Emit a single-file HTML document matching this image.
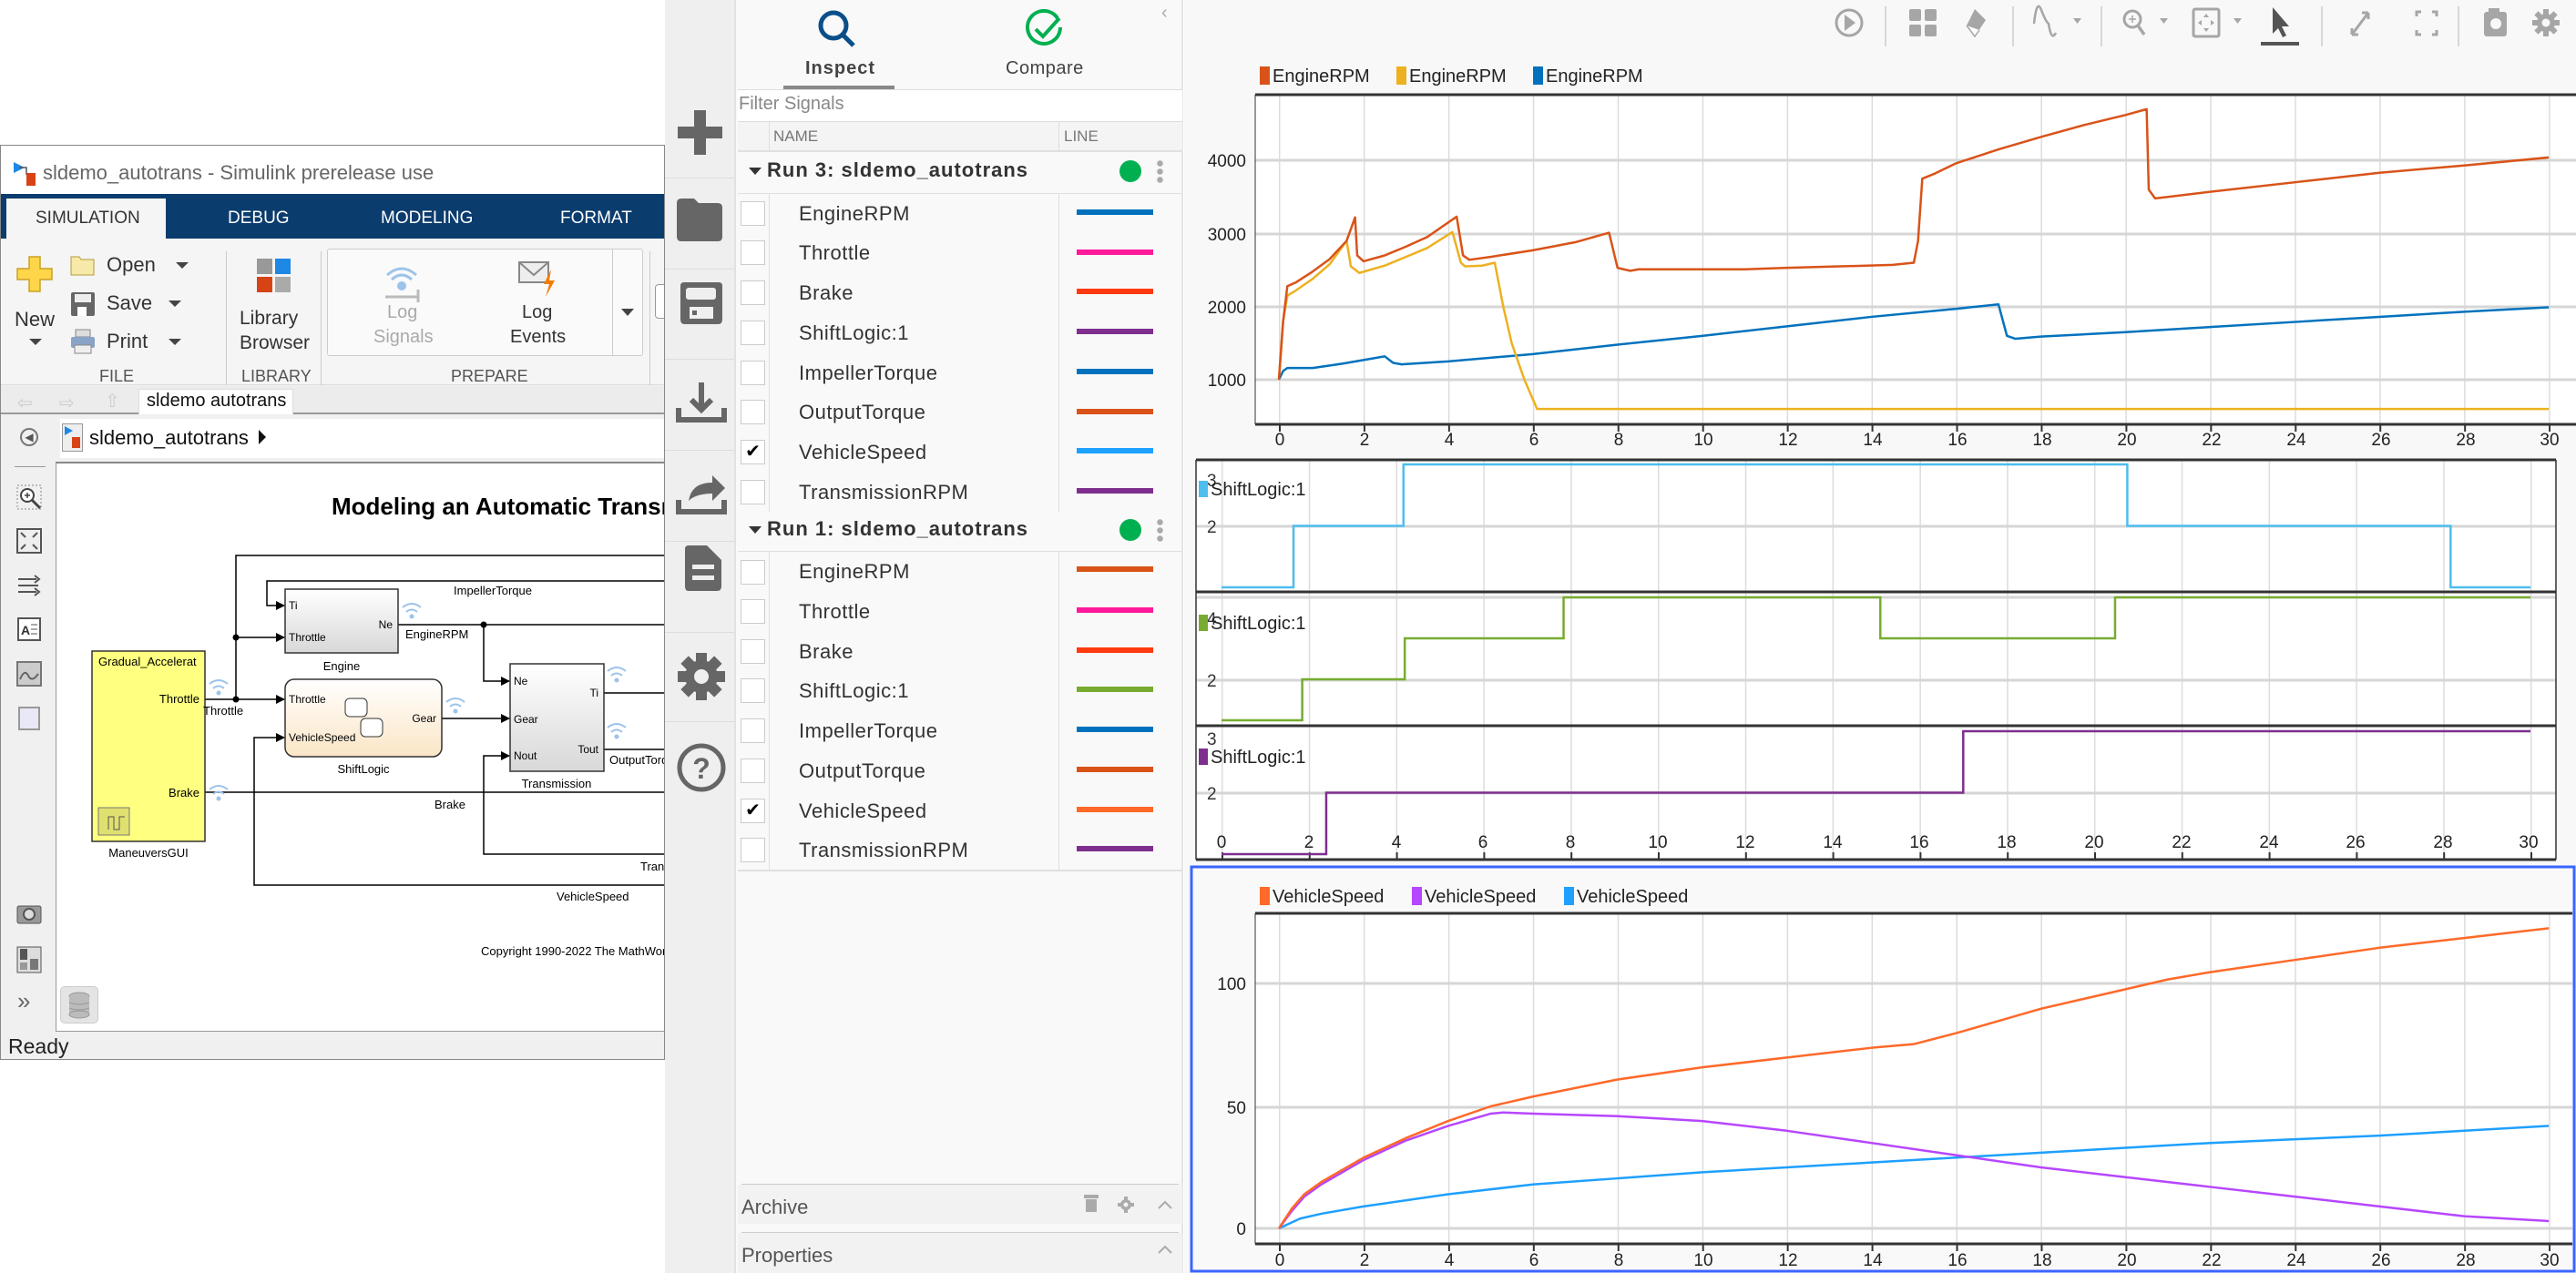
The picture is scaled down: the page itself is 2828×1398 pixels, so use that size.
<!DOCTYPE html>
<html><head><meta charset="utf-8"><style>
*{margin:0;padding:0;box-sizing:border-box}
body{width:2828px;height:1398px;position:relative;overflow:hidden;background:#fff;font-family:"Liberation Sans",Arial,sans-serif}
.a{position:absolute}
.sig{position:absolute;left:877px;font-size:22px;color:#333;letter-spacing:0.5px}
.cb{position:absolute;left:813px;width:27px;height:27px;background:#fff;border:1px solid #ccc}
.ln{position:absolute;left:1182px;width:84px;height:6px}
</style></head><body>

<!-- ============ SIMULINK WINDOW ============ -->
<div class="a" style="left:0;top:159px;width:730px;height:1005px;border:1px solid #888;background:#f0f0f0;overflow:hidden">
 <div class="a" style="left:0;top:0;width:730px;height:53px;background:#fff"></div>
 <svg class="a" style="left:12px;top:14px" width="32" height="36" viewBox="0 0 32 36"><path d="M2 4 L14 10 L2 16Z" fill="#1e88e5"/><path d="M8 10 h8 v8" stroke="#555" fill="none" stroke-width="1.5"/><rect x="16" y="16" width="10" height="14" fill="#d84315"/></svg>
 <div class="a" style="left:46px;top:17px;font-size:22px;color:#666">sldemo_autotrans - Simulink prerelease use</div>
 <div class="a" style="left:0;top:53px;width:730px;height:49px;background:#0b3c6e"></div>
 <div class="a" style="left:6px;top:58px;width:175px;height:44px;background:#f5f5f5"></div>
 <div class="a" style="left:38px;top:69px;font-size:19px;color:#333">SIMULATION</div>
 <div class="a" style="left:249px;top:69px;font-size:19px;color:#fff">DEBUG</div>
 <div class="a" style="left:417px;top:69px;font-size:19px;color:#fff">MODELING</div>
 <div class="a" style="left:614px;top:69px;font-size:19px;color:#fff">FORMAT</div>
 <div class="a" style="left:0;top:102px;width:730px;height:161px;background:#f5f5f5;border-bottom:1px solid #ddd"></div>
 <svg class="a" style="left:17px;top:121px" width="40" height="40" viewBox="0 0 40 40"><path d="M14 1h12v13h13v12H26v13H14V26H1V14h13z" fill="#ffd54a" stroke="#c9a227" stroke-width="1.5"/></svg>
 <div class="a" style="left:15px;top:178px;font-size:22px;color:#333">New</div>
 <div class="a" style="left:31px;top:212px;width:0;height:0;border-left:7px solid transparent;border-right:7px solid transparent;border-top:7px solid #444"></div>
 <svg class="a" style="left:76px;top:119px" width="28" height="24"><path d="M1 3h9l2 3h14v17H1z" fill="#f7e9a8" stroke="#b59a3c"/></svg>
 <div class="a" style="left:116px;top:118px;font-size:22px;color:#333">Open</div>
 <div class="a" style="left:192px;top:128px;border-left:7px solid transparent;border-right:7px solid transparent;border-top:7px solid #444"></div>
 <svg class="a" style="left:76px;top:160px" width="28" height="28"><rect x="1" y="1" width="26" height="26" rx="2" fill="#666"/><rect x="5" y="3" width="18" height="9" fill="#eee"/><rect x="8" y="17" width="10" height="10" fill="#fff"/></svg>
 <div class="a" style="left:116px;top:160px;font-size:22px;color:#333">Save</div>
 <div class="a" style="left:184px;top:170px;border-left:7px solid transparent;border-right:7px solid transparent;border-top:7px solid #444"></div>
 <svg class="a" style="left:76px;top:201px" width="28" height="28"><rect x="6" y="1" width="16" height="8" fill="#ddd" stroke="#888"/><rect x="1" y="9" width="26" height="12" rx="2" fill="#8aa4c8"/><rect x="5" y="18" width="18" height="9" fill="#eee" stroke="#888"/></svg>
 <div class="a" style="left:116px;top:202px;font-size:22px;color:#333">Print</div>
 <div class="a" style="left:184px;top:212px;border-left:7px solid transparent;border-right:7px solid transparent;border-top:7px solid #444"></div>
 <div class="a" style="left:247px;top:116px;width:1px;height:147px;background:#ccc"></div>
 <svg class="a" style="left:280px;top:123px" width="40" height="40"><rect x="1" y="1" width="17" height="17" fill="#999"/><rect x="21" y="1" width="17" height="17" fill="#1e88e5"/><rect x="1" y="21" width="17" height="17" fill="#d84315"/><rect x="21" y="21" width="17" height="17" fill="#aaa"/></svg>
 <div class="a" style="left:262px;top:178px;font-size:21px;color:#333">Library</div>
 <div class="a" style="left:262px;top:205px;font-size:21px;color:#333">Browser</div>
 <div class="a" style="left:351px;top:116px;width:1px;height:147px;background:#ccc"></div>
 <div class="a" style="left:358px;top:113px;width:347px;height:118px;background:#fafafa;border:1px solid #ccc;border-radius:3px"></div>
 <div class="a" style="left:671px;top:114px;width:1px;height:116px;background:#ccc"></div>
 <svg class="a" style="left:420px;top:128px" width="44" height="44"><path d="M4 14 Q20 0 36 14 M9 19 Q20 9 31 19" stroke="#9cc3ea" stroke-width="3" fill="none"/><circle cx="20" cy="26" r="5" fill="#9cc3ea"/><path d="M2 38h36" stroke="#bbb" stroke-width="3"/><path d="M38 30v14" stroke="#bbb" stroke-width="3"/></svg>
 <div class="a" style="left:424px;top:172px;font-size:20px;color:#aaa">Log</div>
 <div class="a" style="left:409px;top:199px;font-size:20px;color:#aaa">Signals</div>
 <svg class="a" style="left:568px;top:126px" width="44" height="44"><rect x="1" y="2" width="32" height="22" fill="#eee" stroke="#888" stroke-width="2"/><path d="M1 2 L17 16 L33 2" stroke="#888" stroke-width="2" fill="none"/><path d="M36 10 L28 26 h6 l-4 14 l10 -18 h-6 z" fill="#f57c00"/></svg>
 <div class="a" style="left:572px;top:172px;font-size:20px;color:#333">Log</div>
 <div class="a" style="left:559px;top:199px;font-size:20px;color:#333">Events</div>
 <div class="a" style="left:681px;top:179px;border-left:7px solid transparent;border-right:7px solid transparent;border-top:8px solid #444"></div>
 <div class="a" style="left:712px;top:116px;width:1px;height:147px;background:#ccc"></div>
 <div class="a" style="left:718px;top:152px;width:14px;height:38px;border:1px solid #999;border-radius:4px;background:#fff"></div>
 <div class="a" style="left:108px;top:243px;font-size:18px;color:#555">FILE</div>
 <div class="a" style="left:264px;top:243px;font-size:18px;color:#555">LIBRARY</div>
 <div class="a" style="left:494px;top:243px;font-size:18px;color:#555">PREPARE</div>
 <div class="a" style="left:0;top:264px;width:730px;height:31px;background:#ececec;border-bottom:2px solid #999"></div>
 <div class="a" style="left:18px;top:270px;font-size:20px;color:#ccc">⇦</div>
 <div class="a" style="left:64px;top:270px;font-size:20px;color:#ccc">⇨</div>
 <div class="a" style="left:114px;top:268px;font-size:20px;color:#ccc">⇧</div>
 <div class="a" style="left:151px;top:267px;width:170px;height:28px;background:#fff;border:1px solid #ddd;border-bottom:none"></div>
 <div class="a" style="left:160px;top:269px;font-size:20px;color:#111">sldemo  autotrans</div>
 <div class="a" style="left:65px;top:300px;width:665px;height:43px;background:#fff"></div>
 <svg class="a" style="left:67px;top:305px" width="24" height="32"><rect x="0.5" y="0.5" width="22" height="30" fill="#eee" stroke="#999"/><path d="M3 3l9 5-9 5z" fill="#1e88e5"/><rect x="11" y="15" width="9" height="12" fill="#d84315"/></svg>
 <div class="a" style="left:97px;top:308px;font-size:22px;color:#111">sldemo_autotrans</div>
 <div class="a" style="left:283px;top:312px;border-top:8px solid transparent;border-bottom:8px solid transparent;border-left:8px solid #111"></div>
 <div class="a" style="left:60px;top:347px;width:670px;height:2px;background:#888"></div>
 <div class="a" style="left:61px;top:349px;width:669px;height:623px;background:#fff"></div>
 <div class="a" style="left:60px;top:349px;width:1px;height:624px;background:#999"></div>
 <div class="a" style="left:61px;top:972px;width:669px;height:1px;background:#999"></div>
 <div class="a" style="left:21px;top:310px;width:20px;height:20px;border:2px solid #777;border-radius:50%;font-size:12px;line-height:16px;text-align:center;color:#555">◀</div>
 <div class="a" style="left:15px;top:352px;width:34px;height:1px;background:#999"></div>
 <svg class="a" style="left:17px;top:372px" width="30" height="30"><rect x="1" y="1" width="26" height="26" fill="none" stroke="#888" stroke-dasharray="2 2"/><circle cx="12" cy="12" r="7" fill="#fff" stroke="#444" stroke-width="2"/><path d="M17 17l9 9" stroke="#444" stroke-width="3"/><path d="M9 12h6M12 9v6" stroke="#444" stroke-width="1.5"/></svg>
 <svg class="a" style="left:17px;top:420px" width="28" height="28"><rect x="1" y="1" width="26" height="26" fill="#eee" stroke="#555" stroke-width="2"/><path d="M5 5l5 5M23 5l-5 5M5 23l5-5M23 23l-5-5" stroke="#555" stroke-width="2"/></svg>
 <svg class="a" style="left:17px;top:470px" width="28" height="26"><path d="M2 6h20M2 13h22M2 20h20M20 2l5 4-5 4M20 16l5 4-5 4" stroke="#555" stroke-width="2" fill="none"/></svg>
 <svg class="a" style="left:18px;top:518px" width="26" height="26"><rect x="1" y="1" width="24" height="24" fill="#fff" stroke="#555" stroke-width="2"/><text x="4" y="19" font-size="14" font-weight="bold" fill="#333" font-family="Liberation Sans">A</text><path d="M15 8h7M15 13h7M15 18h7" stroke="#555"/></svg>
 <svg class="a" style="left:17px;top:566px" width="28" height="28"><rect x="1" y="1" width="26" height="26" fill="#ccc" stroke="#777" stroke-width="2"/><path d="M4 20 Q9 8 13 16 T24 14" stroke="#666" stroke-width="2" fill="none"/></svg>
 <div class="a" style="left:19px;top:616px;width:24px;height:26px;background:#e8e8f6;border:2px solid #999"></div>
 <svg class="a" style="left:17px;top:830px" width="28" height="26"><rect x="1" y="5" width="26" height="19" rx="2" fill="#999" stroke="#555"/><circle cx="14" cy="14" r="6" fill="#ddd" stroke="#555" stroke-width="2"/></svg>
 <svg class="a" style="left:17px;top:879px" width="28" height="30"><rect x="1" y="1" width="26" height="28" fill="#ddd" stroke="#555"/><rect x="4" y="3" width="8" height="12" fill="#555"/><rect x="15" y="14" width="9" height="12" fill="#777"/><rect x="4" y="18" width="8" height="8" fill="#999"/></svg>
 <div class="a" style="left:18px;top:924px;font-size:26px;color:#666">»</div>
 <div class="a" style="left:65px;top:923px;width:42px;height:41px;background:#e4e4e4;border:1px solid #ccc;border-radius:5px"></div>
 <svg class="a" style="left:73px;top:929px" width="26" height="30"><ellipse cx="13" cy="5" rx="11" ry="4" fill="#bbb" stroke="#999"/><rect x="2" y="5" width="22" height="20" fill="#bbb"/><ellipse cx="13" cy="25" rx="11" ry="4" fill="#bbb" stroke="#999"/><path d="M2 12 Q13 16 24 12M2 18 Q13 22 24 18" stroke="#999" fill="none"/></svg>
 <div class="a" style="left:8px;top:976px;font-size:23px;color:#222">Ready</div>

 <svg class="a" style="left:0;top:0" width="730" height="1005" viewBox="0 159 730 1005" font-family="Liberation Sans, sans-serif">
  <defs><linearGradient id="gg" x1="0" y1="0" x2="0" y2="1"><stop offset="0" stop-color="#fff"/><stop offset="1" stop-color="#d8d8d8"/></linearGradient>
  <linearGradient id="sl" x1="0" y1="0" x2="0" y2="1"><stop offset="0" stop-color="#fff"/><stop offset="1" stop-color="#fbe6c6"/></linearGradient>
  <marker id="ar" markerWidth="10" markerHeight="10" refX="9" refY="5" orient="auto" markerUnits="userSpaceOnUse"><path d="M0 0L10 5L0 10z" fill="#000"/></marker></defs>
  <text x="363" y="564" font-size="26" font-weight="bold" fill="#000">Modeling an Automatic Transmission</text>
  <g stroke="#000" stroke-width="1.5" fill="none">
   <path d="M258 767V609H730"/>
   <path d="M730 637H292V664H311" marker-end="url(#ar)"/>
   <path d="M258 699H311" marker-end="url(#ar)"/>
   <path d="M224 767H311" marker-end="url(#ar)"/>
   <path d="M436 685H730"/>
   <path d="M530 685V747H558" marker-end="url(#ar)"/>
   <path d="M484 788H558" marker-end="url(#ar)"/>
   <path d="M224 869H730"/>
   <path d="M730 937H530V829H558" marker-end="url(#ar)"/>
   <path d="M730 971H278V809H311" marker-end="url(#ar)"/>
   <path d="M662 760H730M662 822H730"/>
  </g>
  <circle cx="258" cy="699" r="3.5"/><circle cx="258" cy="767" r="3.5"/><circle cx="530" cy="685" r="3.5"/>
  <rect x="100" y="714" width="124" height="209" fill="#ffff80" stroke="#333" stroke-width="1.5"/>
  <text x="107" y="730" font-size="13">Gradual_Accelerat</text>
  <text x="218" y="771" font-size="13" text-anchor="end">Throttle</text>
  <text x="218" y="874" font-size="13" text-anchor="end">Brake</text>
  <rect x="107" y="886" width="34" height="30" fill="#e0e070" stroke="#777"/><path d="M118 910v-14h6v14h6v-14h6" stroke="#555" fill="none"/>
  <text x="162" y="940" font-size="13" text-anchor="middle">ManeuversGUI</text>
  <text x="222" y="784" font-size="13">Throttle</text>
  <rect x="312" y="646" width="124" height="70" fill="url(#gg)" stroke="#333" stroke-width="1.5"/>
  <text x="316" y="668" font-size="12">Ti</text><text x="316" y="703" font-size="12">Throttle</text><text x="430" y="689" font-size="12" text-anchor="end">Ne</text>
  <text x="374" y="735" font-size="13" text-anchor="middle">Engine</text>
  <text x="444" y="700" font-size="13">EngineRPM</text>
  <text x="497" y="652" font-size="13">ImpellerTorque</text>
  <rect x="312" y="745" width="172" height="85" rx="10" fill="url(#sl)" stroke="#333" stroke-width="1.5"/>
  <text x="316" y="771" font-size="12">Throttle</text><text x="316" y="813" font-size="12">VehicleSpeed</text><text x="478" y="792" font-size="12" text-anchor="end">Gear</text>
  <rect x="378" y="766" width="24" height="20" rx="5" fill="#fff" stroke="#333"/><rect x="395" y="788" width="24" height="20" rx="5" fill="#fff" stroke="#333"/>
  <text x="398" y="848" font-size="13" text-anchor="middle">ShiftLogic</text>
  <rect x="559" y="728" width="103" height="118" fill="url(#gg)" stroke="#333" stroke-width="1.5"/>
  <text x="563" y="751" font-size="12">Ne</text><text x="563" y="793" font-size="12">Gear</text><text x="563" y="833" font-size="12">Nout</text>
  <text x="656" y="764" font-size="12" text-anchor="end">Ti</text><text x="656" y="826" font-size="12" text-anchor="end">Tout</text>
  <text x="610" y="864" font-size="13" text-anchor="middle">Transmission</text>
  <text x="668" y="838" font-size="13">OutputTorque</text>
  <text x="476" y="887" font-size="13">Brake</text>
  <text x="702" y="955" font-size="13">Transmission</text>
  <text x="610" y="988" font-size="13">VehicleSpeed</text>
  <text x="527" y="1048" font-size="13">Copyright 1990-2022 The MathWorks</text>
  <g fill="none" stroke="#9cc3ea" stroke-width="2">
   <path d="M229 750q10-8 20 0M233 755q6-5 12 0"/><path d="M229 866q10-8 20 0M233 871q6-5 12 0"/><path d="M441 666q10-8 20 0M445 671q6-5 12 0"/><path d="M489 770q10-8 20 0M493 775q6-5 12 0"/><path d="M666 736q10-8 20 0M670 741q6-5 12 0"/><path d="M666 798q10-8 20 0M670 803q6-5 12 0"/>
  </g>
  <g fill="#9cc3ea"><circle cx="239" cy="760" r="2.5"/><circle cx="239" cy="876" r="2.5"/><circle cx="451" cy="676" r="2.5"/><circle cx="499" cy="780" r="2.5"/><circle cx="676" cy="746" r="2.5"/><circle cx="676" cy="808" r="2.5"/></g>
 </svg>
</div>

<!-- ============ SDI SIDEBAR ============ -->
<div class="a" style="left:730px;top:0;width:78px;height:1398px;background:#efefef;border-right:2px solid #e2e2e2"></div>
<div class="a" style="left:730px;top:195px;width:76px;height:1px;background:#ddd"></div>
<div class="a" style="left:730px;top:295px;width:76px;height:1px;background:#ddd"></div>
<div class="a" style="left:730px;top:394px;width:76px;height:1px;background:#ddd"></div>
<div class="a" style="left:730px;top:494px;width:76px;height:1px;background:#ddd"></div>
<div class="a" style="left:730px;top:594px;width:76px;height:1px;background:#ddd"></div>
<div class="a" style="left:730px;top:694px;width:76px;height:1px;background:#ddd"></div>
<div class="a" style="left:730px;top:792px;width:76px;height:1px;background:#ddd"></div>
<svg class="a" style="left:730px;top:0" width="78" height="900" fill="#666">
 <path d="M32 121h13v18h18v13H45v18H32V152H14v-13h18z"/>
 <path d="M13 223q0-5 5-5h14l5 5h21q5 0 5 5v32q0 5-5 5H18q-5 0-5-5z"/>
 <path d="M17 314q0-4 4-4h38q4 0 4 4v37q0 5-5 5H22q-5 0-5-5z"/><rect x="23" y="316" width="33" height="13" rx="3" fill="#efefef"/><rect x="27" y="337" width="26" height="13" fill="#efefef"/><rect x="30" y="341" width="5" height="5" fill="#666"/>
 <path d="M40 420v30M29 439l11 11 11-11" stroke="#666" stroke-width="6" fill="none"/><path d="M15 448v13h50v-13" stroke="#666" stroke-width="6" fill="none"/>
 <path d="M15 549v13h50v-13" stroke="#666" stroke-width="6" fill="none"/><path d="M26 550q3-20 26-20v-8l14 14-14 14v-8q-18 0-26 8z"/>
 <path d="M22 603q0-4 4-4h20l16 16v29q0 5-5 5H26q-4 0-4-5z"/><rect x="30" y="620" width="24" height="5" fill="#efefef"/><rect x="30" y="632" width="24" height="5" fill="#efefef"/>
 <g transform="translate(40 743)"><circle r="18"/><g><rect x="-6" y="-26" width="12" height="12"/><rect x="-6" y="14" width="12" height="12"/><rect x="-26" y="-6" width="12" height="12"/><rect x="14" y="-6" width="12" height="12"/><rect x="-6" y="-26" width="12" height="12" transform="rotate(45)"/><rect x="-6" y="14" width="12" height="12" transform="rotate(45)"/><rect x="-26" y="-6" width="12" height="12" transform="rotate(45)"/><rect x="14" y="-6" width="12" height="12" transform="rotate(45)"/></g><circle r="8" fill="#efefef"/></g>
 <ellipse cx="40" cy="843" rx="24" ry="24" fill="none" stroke="#666" stroke-width="5"/><text x="40" y="855" text-anchor="middle" font-size="32" font-weight="bold" font-family="Liberation Sans">?</text>
</svg>

<!-- ============ SIGNAL PANEL ============ -->
<div class="a" style="left:808px;top:0;width:491px;height:1398px;background:#f9f9f9;border-right:2px solid #e4e4e4"></div>
<svg class="a" style="left:895px;top:8px" width="50" height="46"><circle cx="20" cy="20" r="14" fill="none" stroke="#0b4f8a" stroke-width="5"/><path d="M30 30l12 12" stroke="#0b4f8a" stroke-width="5"/></svg>
<div class="a" style="left:884px;top:64px;font-size:20px;font-weight:bold;color:#444;letter-spacing:1px">Inspect</div>
<div class="a" style="left:860px;top:94px;width:122px;height:4px;background:#888"></div>
<svg class="a" style="left:1125px;top:10px" width="44" height="44"><path d="M36 10 A18 18 0 1 0 39 20" fill="none" stroke="#00b050" stroke-width="4"/><path d="M12 22l8 8 18-20" fill="none" stroke="#00b050" stroke-width="4"/></svg>
<div class="a" style="left:1104px;top:64px;font-size:20px;color:#444;letter-spacing:0.5px">Compare</div>
<div class="a" style="left:1275px;top:3px;font-size:20px;color:#aaa">‹</div>
<div class="a" style="left:810px;top:98px;width:488px;height:36px;background:#fff;border-top:1px solid #ddd;border-bottom:1px solid #ddd"></div>
<div class="a" style="left:811px;top:103px;font-size:20px;color:#888">Filter Signals</div>
<div class="a" style="left:810px;top:134px;width:488px;height:33px;background:#f4f4f4;border-bottom:2px solid #e0e0e0"></div>
<div class="a" style="left:844px;top:134px;width:1px;height:33px;background:#ddd"></div>
<div class="a" style="left:1162px;top:134px;width:1px;height:33px;background:#ddd"></div>
<div class="a" style="left:849px;top:140px;font-size:17px;color:#777">NAME</div>
<div class="a" style="left:1168px;top:140px;font-size:17px;color:#777">LINE</div>

<div class="a" style="left:810px;top:212px;width:488px;height:1px;background:#e0e0e0"></div>
<div class="a" style="left:822px;top:184px;border-left:7px solid transparent;border-right:7px solid transparent;border-top:8px solid #333"></div>
<div class="a" style="left:842px;top:174px;font-size:22px;font-weight:bold;color:#333;letter-spacing:1px">Run 3: sldemo_autotrans</div>
<div class="a" style="left:1229px;top:176px;width:24px;height:24px;border-radius:50%;background:#00b050"></div>
<div class="a" style="left:1270px;top:175px;width:7px;height:26px;background:radial-gradient(circle,#aaa 3px,transparent 3.5px) 0 0/7px 9px"></div>
<div class="a" style="left:844px;top:212px;width:1px;height:350px;background:#e0e0e0"></div>
<div class="a" style="left:1162px;top:212px;width:1px;height:350px;background:#e0e0e0"></div>

<div class="cb" style="top:221px"></div><div class="sig" style="top:222px">EngineRPM</div><div class="ln" style="top:230px;background:#0072bd"></div>
<div class="cb" style="top:264px"></div><div class="sig" style="top:265px">Throttle</div><div class="ln" style="top:274px;background:#ff1a9c"></div>
<div class="cb" style="top:308px"></div><div class="sig" style="top:309px">Brake</div><div class="ln" style="top:317px;background:#ff3a10"></div>
<div class="cb" style="top:352px"></div><div class="sig" style="top:353px">ShiftLogic:1</div><div class="ln" style="top:361px;background:#7e2f8e"></div>
<div class="cb" style="top:396px"></div><div class="sig" style="top:397px">ImpellerTorque</div><div class="ln" style="top:405px;background:#0072bd"></div>
<div class="cb" style="top:439px"></div><div class="sig" style="top:440px">OutputTorque</div><div class="ln" style="top:449px;background:#d95319"></div>
<div class="cb" style="top:483px;font-size:20px;line-height:25px;text-align:center">✔</div><div class="sig" style="top:484px">VehicleSpeed</div><div class="ln" style="top:492px;background:#1ea0ff"></div>
<div class="cb" style="top:527px"></div><div class="sig" style="top:528px">TransmissionRPM</div><div class="ln" style="top:536px;background:#7e2f8e"></div>

<div class="a" style="left:822px;top:578px;border-left:7px solid transparent;border-right:7px solid transparent;border-top:8px solid #333"></div>
<div class="a" style="left:842px;top:568px;font-size:22px;font-weight:bold;color:#333;letter-spacing:1px">Run 1: sldemo_autotrans</div>
<div class="a" style="left:1229px;top:570px;width:24px;height:24px;border-radius:50%;background:#00b050"></div>
<div class="a" style="left:1270px;top:569px;width:7px;height:26px;background:radial-gradient(circle,#aaa 3px,transparent 3.5px) 0 0/7px 9px"></div>
<div class="a" style="left:810px;top:605px;width:488px;height:1px;background:#e0e0e0"></div>
<div class="a" style="left:844px;top:606px;width:1px;height:349px;background:#e0e0e0"></div>
<div class="a" style="left:1162px;top:606px;width:1px;height:349px;background:#e0e0e0"></div>
<div class="a" style="left:810px;top:955px;width:488px;height:2px;background:#e0e0e0"></div>

<div class="cb" style="top:615px"></div><div class="sig" style="top:615px">EngineRPM</div><div class="ln" style="top:622px;background:#d95319"></div>
<div class="cb" style="top:658px"></div><div class="sig" style="top:659px">Throttle</div><div class="ln" style="top:667px;background:#ff1a9c"></div>
<div class="cb" style="top:702px"></div><div class="sig" style="top:703px">Brake</div><div class="ln" style="top:711px;background:#ff3a10"></div>
<div class="cb" style="top:745px"></div><div class="sig" style="top:746px">ShiftLogic:1</div><div class="ln" style="top:754px;background:#77ac30"></div>
<div class="cb" style="top:789px"></div><div class="sig" style="top:790px">ImpellerTorque</div><div class="ln" style="top:798px;background:#0072bd"></div>
<div class="cb" style="top:833px"></div><div class="sig" style="top:834px">OutputTorque</div><div class="ln" style="top:842px;background:#d95319"></div>
<div class="cb" style="top:877px;font-size:20px;line-height:25px;text-align:center">✔</div><div class="sig" style="top:878px">VehicleSpeed</div><div class="ln" style="top:886px;background:#ff6929"></div>
<div class="cb" style="top:920px"></div><div class="sig" style="top:921px">TransmissionRPM</div><div class="ln" style="top:929px;background:#7e2f8e"></div>

<div class="a" style="left:814px;top:1300px;width:480px;height:1px;background:#ccc"></div>
<div class="a" style="left:810px;top:1301px;width:488px;height:43px;background:#f2f2f2"></div>
<div class="a" style="left:814px;top:1313px;font-size:22px;color:#555">Archive</div>
<svg class="a" style="left:1188px;top:1310px" width="110" height="26"><rect x="2" y="2" width="16" height="4" fill="#aaa"/><rect x="4" y="7" width="12" height="14" fill="#aaa"/><g transform="translate(48 13)" fill="#aaa"><circle r="6"/><rect x="-2" y="-9" width="4" height="18"/><rect x="-9" y="-2" width="18" height="4"/><circle r="2.5" fill="#f2f2f2"/></g><path d="M84 17l7-7 7 7" stroke="#aaa" stroke-width="2" fill="none"/></svg>
<div class="a" style="left:814px;top:1353px;width:480px;height:1px;background:#ccc"></div>
<div class="a" style="left:810px;top:1354px;width:488px;height:44px;background:#f2f2f2"></div>
<div class="a" style="left:814px;top:1366px;font-size:22px;color:#555">Properties</div>
<svg class="a" style="left:1270px;top:1362px" width="30" height="20"><path d="M2 14l7-7 7 7" stroke="#aaa" stroke-width="2" fill="none"/></svg>

<!-- ============ PLOT AREA ============ -->
<div class="a" style="left:1300px;top:0;width:1528px;height:1398px;background:#f8f8f8"></div>
<svg class="a" style="left:0;top:0" width="2828" height="1398" font-family="Liberation Sans Narrow, Liberation Sans, sans-serif">
 <defs>
  <pattern id="v1" x="1404" y="0" width="92.94" height="10" patternUnits="userSpaceOnUse"><rect x="0" y="0" width="1.5" height="10" fill="#dcdcdc"/></pattern>
  <pattern id="v2" x="1341" y="0" width="95.8" height="10" patternUnits="userSpaceOnUse"><rect x="0" y="0" width="1.5" height="10" fill="#dcdcdc"/></pattern>
  <pattern id="t1" x="1404" y="0" width="92.94" height="10" patternUnits="userSpaceOnUse"><rect x="0" y="0" width="2" height="10" fill="#333"/></pattern>
  <pattern id="t2" x="1341" y="0" width="95.8" height="10" patternUnits="userSpaceOnUse"><rect x="0" y="0" width="2" height="10" fill="#333"/></pattern>
 </defs>
 <g fill="#a6a6a6" stroke="#a6a6a6">
  <circle cx="2030" cy="25" r="14" fill="none" stroke-width="3"/><path d="M2025 16l12 9-12 9z" stroke="none"/>
  <path d="M2070 7v44M2210 7v44M2307 7v44M2549 7v44M2699 7v44" stroke="#ccc" stroke-width="1.5"/>
  <rect x="2096" y="10" width="13" height="13" rx="2" stroke="none"/><rect x="2113" y="10" width="13" height="13" rx="2" stroke="none"/><rect x="2096" y="27" width="13" height="13" rx="2" stroke="none"/><rect x="2113" y="27" width="13" height="13" rx="2" stroke="none"/>
  <path d="M2168 10l12 12-12 18-9-12z" stroke="none"/><path d="M2159 28l9 12 5-7" fill="#fff" stroke="#a6a6a6" stroke-width="1.5"/>
  <path d="M2233 26q3-28 8-15t8 15q3 20 8 10" fill="none" stroke-width="2.5"/><path d="M2276 20h9l-4.5 6z" stroke="none"/>
  <circle cx="2341" cy="21" r="9" fill="none" stroke-width="3"/><path d="M2347 28l7 10" stroke-width="3.5"/><path d="M2337 21h8M2341 17v8" stroke-width="1.5"/><path d="M2371 20h9l-4.5 6z" stroke="none"/>
  <rect x="2408" y="10" width="28" height="30" rx="2" fill="none" stroke-width="3"/><path d="M2422 15l-3 4h6zM2422 35l-3-4h6zM2413 25l4-3v6zM2431 25l-4-3v6z" stroke="none"/><path d="M2452 20h9l-4.5 6z" stroke="none"/>
  <path d="M2495 8v29l6-6 5 10 4-2-5-10h8z" fill="#555" stroke="none"/><rect x="2482" y="46" width="42" height="4" fill="#555" stroke="none"/>
  <path d="M2582 38l18-24M2600 14h-7M2600 14v7M2582 38h7M2582 38v-7" stroke-width="3" fill="none"/>
  <path d="M2653 18v-5h5M2670 13h5v5M2675 33v5h-5M2658 38h-5v-5" fill="none" stroke-width="3"/>
  <rect x="2727" y="13" width="25" height="27" rx="3" stroke="none"/><rect x="2732" y="9" width="12" height="6" stroke="none"/><circle cx="2740" cy="26" r="6" fill="#f8f8f8" stroke="none"/>
  <g transform="translate(2795 25)" stroke="none"><circle r="10"/><rect x="-3" y="-15" width="6" height="30"/><rect x="-15" y="-3" width="30" height="6"/><rect x="-3" y="-15" width="6" height="30" transform="rotate(45)"/><rect x="-3" y="-15" width="6" height="30" transform="rotate(-45)"/><circle r="4.5" fill="#f8f8f8"/></g>
 </g>

 <rect x="1383" y="73" width="11" height="20" fill="#d95319"/><text x="1397" y="90" font-size="20" fill="#222">EngineRPM</text>
 <rect x="1533" y="73" width="11" height="20" fill="#edb120"/><text x="1547" y="90" font-size="20" fill="#222">EngineRPM</text>
 <rect x="1683" y="73" width="11" height="20" fill="#0072bd"/><text x="1697" y="90" font-size="20" fill="#222">EngineRPM</text>
 <rect x="1378" y="104" width="1450" height="362" fill="#fff"/>
 <rect x="1378" y="104" width="1450" height="362" fill="url(#v1)"/>
 <g stroke="#d6d6d6" stroke-width="3"><path d="M1378 176H2828M1378 257H2828M1378 337H2828M1378 417H2828"/></g>
 <path d="M1378 104H2828M1378 466H2828" stroke="#333" stroke-width="3"/>
 <path d="M1378 104V466" stroke="#333" stroke-width="1"/>
 <rect x="1400" y="466" width="1400" height="8" fill="url(#t1)"/>
 <g font-size="19" fill="#222" text-anchor="end"><text x="1368" y="183">4000</text><text x="1368" y="264">3000</text><text x="1368" y="344">2000</text><text x="1368" y="424">1000</text></g>
 <g font-size="19" fill="#222" text-anchor="middle"><text x="1405" y="489">0</text><text x="1498" y="489">2</text><text x="1591" y="489">4</text><text x="1684" y="489">6</text><text x="1777" y="489">8</text><text x="1870" y="489">10</text><text x="1963" y="489">12</text><text x="2056" y="489">14</text><text x="2149" y="489">16</text><text x="2242" y="489">18</text><text x="2335" y="489">20</text><text x="2428" y="489">22</text><text x="2521" y="489">24</text><text x="2614" y="489">26</text><text x="2707" y="489">28</text><text x="2799" y="489">30</text></g>
 <g transform="matrix(46.47 0 0 -0.0803 1404 497.3)" fill="none" stroke-width="2.5" stroke-linejoin="round">
  <polyline vector-effect="non-scaling-stroke" stroke="#0072bd" points="0,1000 0.1,1120 0.2,1160 0.8,1160 1.5,1220 2.2,1290 2.5,1320 2.7,1230 2.9,1210 4,1250 6,1350 8,1480 10,1600 12,1730 14,1860 16,1970 17,2030 17.2,1600 17.4,1560 18,1590 20,1650 22,1720 24,1790 26,1860 28,1930 30,1990"/>
  <polyline vector-effect="non-scaling-stroke" stroke="#edb120" points="0,1000 0.1,1800 0.2,2150 0.4,2220 0.8,2380 1.2,2580 1.6,2900 1.7,2550 1.9,2460 2.5,2560 3,2680 3.5,2800 4.1,3020 4.3,2600 4.4,2550 4.8,2560 5.1,2600 5.3,2000 5.5,1500 5.8,1000 6.1,600 30,600"/>
  <polyline vector-effect="non-scaling-stroke" stroke="#d95319" points="0,1000 0.1,1800 0.2,2280 0.4,2330 0.8,2480 1.2,2650 1.6,2900 1.8,3220 1.85,2700 2,2620 2.5,2700 3,2820 3.5,2950 4.2,3230 4.35,2700 4.5,2640 5,2680 6,2770 7,2880 7.8,3010 8,2530 8.3,2490 8.5,2510 11,2510 12,2530 14.5,2570 15,2600 15.1,2900 15.2,3750 15.5,3820 16,3960 17,4150 18,4320 19,4480 20,4620 20.5,4700 20.55,3600 20.7,3480 21,3500 22,3570 24,3700 26,3830 28,3930 30,4040"/>
 </g>

 <rect x="1313" y="505" width="1493" height="439" fill="#fff"/>
 <rect x="1313" y="505" width="1493" height="439" fill="url(#v2)"/>
 <g stroke="#d6d6d6" stroke-width="3"><path d="M1313 578H2806M1313 656H2806M1313 747H2806M1313 871H2806"/></g>
 <path d="M1313 505H2806M1313 650H2806M1313 797H2806M1313 944H2806" stroke="#333" stroke-width="3"/>
 <path d="M1313 505V944M2806 505V944" stroke="#333" stroke-width="1.5"/>
 <rect x="1338" y="936" width="1445" height="8" fill="url(#t2)"/>
 <g font-size="19" fill="#333"><text x="1325" y="534">3</text><text x="1325" y="585">2</text><text x="1325" y="686">4</text><text x="1325" y="754">2</text><text x="1325" y="818">3</text><text x="1325" y="878">2</text></g>
 <g font-size="20" fill="#222"><rect x="1316" y="528" width="10" height="18" fill="#4dbeee"/><text x="1329" y="544">ShiftLogic:1</text>
 <rect x="1316" y="675" width="10" height="18" fill="#77ac30"/><text x="1329" y="691">ShiftLogic:1</text>
 <rect x="1316" y="822" width="10" height="18" fill="#7e2f8e"/><text x="1329" y="838">ShiftLogic:1</text></g>
 <g font-size="19" fill="#222" text-anchor="middle"><text x="1341" y="931">0</text><text x="1437" y="931">2</text><text x="1533" y="931">4</text><text x="1628" y="931">6</text><text x="1724" y="931">8</text><text x="1820" y="931">10</text><text x="1916" y="931">12</text><text x="2012" y="931">14</text><text x="2107" y="931">16</text><text x="2203" y="931">18</text><text x="2299" y="931">20</text><text x="2395" y="931">22</text><text x="2491" y="931">24</text><text x="2586" y="931">26</text><text x="2682" y="931">28</text><text x="2776" y="931">30</text></g>
 <g fill="none" stroke-width="2.5">
  <polyline transform="matrix(47.9 0 0 -67.5 1341 712.5)" vector-effect="non-scaling-stroke" stroke="#4dbeee" points="0,1 1.65,1 1.65,2 4.17,2 4.17,3 20.76,3 20.76,2 28.17,2 28.17,1 30,1"/>
  <polyline transform="matrix(47.9 0 0 -45 1341 836)" vector-effect="non-scaling-stroke" stroke="#77ac30" points="0,1 1.85,1 1.85,2 4.2,2 4.2,3 7.84,3 7.84,4 15.1,4 15.1,3 20.48,3 20.48,4 30,4"/>
  <polyline transform="matrix(47.9 0 0 -67.5 1341 1005.5)" vector-effect="non-scaling-stroke" stroke="#7e2f8e" points="0,1 2.4,1 2.4,2 17,2 17,3 30,3"/>
 </g>

 <rect x="1308" y="952" width="1518" height="444" fill="#f9f9f9" stroke="#3a66ff" stroke-width="3"/>
 <rect x="1383" y="974" width="11" height="20" fill="#ff6929"/><text x="1397" y="991" font-size="20" fill="#222">VehicleSpeed</text>
 <rect x="1550" y="974" width="11" height="20" fill="#b746ff"/><text x="1564" y="991" font-size="20" fill="#222">VehicleSpeed</text>
 <rect x="1717" y="974" width="11" height="20" fill="#1ea0ff"/><text x="1731" y="991" font-size="20" fill="#222">VehicleSpeed</text>
 <rect x="1378" y="1003" width="1446" height="363" fill="#fff"/>
 <rect x="1378" y="1003" width="1446" height="363" fill="url(#v1)"/>
 <g stroke="#d6d6d6" stroke-width="3"><path d="M1378 1080H2824M1378 1216H2824M1378 1349H2824"/></g>
 <path d="M1378 1003H2824M1378 1366H2824" stroke="#333" stroke-width="3"/>
 <path d="M1378 1003V1366" stroke="#333" stroke-width="1"/>
 <rect x="1400" y="1366" width="1400" height="8" fill="url(#t1)"/>
 <g font-size="19" fill="#222" text-anchor="end"><text x="1368" y="1087">100</text><text x="1368" y="1223">50</text><text x="1368" y="1356">0</text></g>
 <g font-size="19" fill="#222" text-anchor="middle"><text x="1405" y="1390">0</text><text x="1498" y="1390">2</text><text x="1591" y="1390">4</text><text x="1684" y="1390">6</text><text x="1777" y="1390">8</text><text x="1870" y="1390">10</text><text x="1963" y="1390">12</text><text x="2056" y="1390">14</text><text x="2149" y="1390">16</text><text x="2242" y="1390">18</text><text x="2335" y="1390">20</text><text x="2428" y="1390">22</text><text x="2521" y="1390">24</text><text x="2614" y="1390">26</text><text x="2707" y="1390">28</text><text x="2799" y="1390">30</text></g>
 <g transform="matrix(46.47 0 0 -2.68 1404 1349)" fill="none" stroke-width="2.5" stroke-linejoin="round">
  <polyline vector-effect="non-scaling-stroke" stroke="#1ea0ff" points="0,0 0.5,4 1,6 2,9 4,14 6,18 8,20.5 10,23 12,25 14,27 16,29 18,31 20,33 22,35 24,36.5 26,38 28,40 30,42"/>
  <polyline vector-effect="non-scaling-stroke" stroke="#b746ff" points="0,0 0.3,7 0.6,13 1,18 2,28 3,36 4,42 5,47 5.3,47.5 6,47 8,46 9,45 10,44 12,40 14,35 16,30 18,25 20,21 22,17 24,13 26,9 28,5 30,3"/>
  <polyline vector-effect="non-scaling-stroke" stroke="#ff6929" points="0,0 0.3,8 0.6,14 1,19 2,29 3,37 4,44 5,50 6,54 8,61 10,66 12,70 14,74 15,75.5 16,80 18,90 20,98 21,102 22,105 24,110 26,115 28,119 30,123"/>
 </g>
</svg>
</body></html>
